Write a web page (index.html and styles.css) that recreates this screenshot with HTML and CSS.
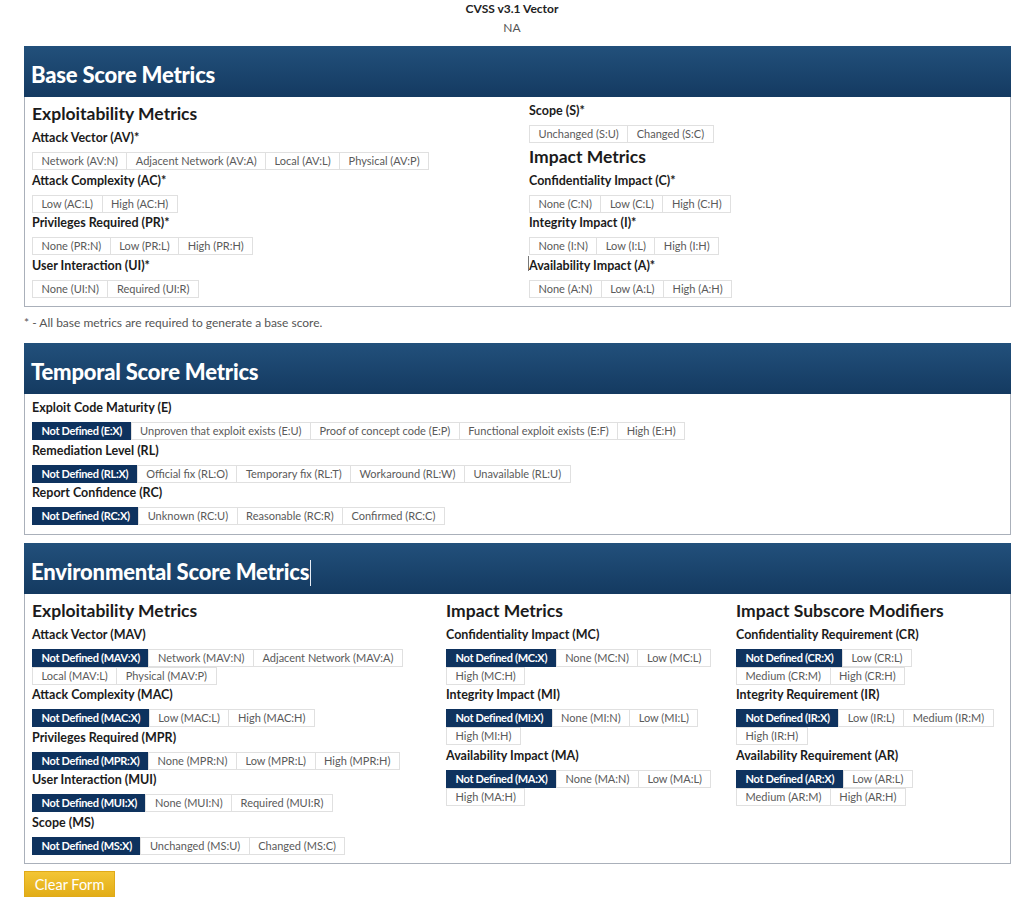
FILE: index.html
```html
<!doctype html>
<html>
<head>
<meta charset="utf-8">
<title>CVSS v3.1 Calculator</title>
<link rel="stylesheet" href="styles.css">
</head>
<body>
<div class="vector">
	<div class="vector_title">CVSS v3.1 Vector</div>
	<div class="vector_value">NA</div>
</div>

<div class="wrap">
	<!-- base -->
	<div class="panel">
		<div class="panel_head"><h2>Base Score Metrics</h2></div>
		<div class="panel_body cols2">
			<div class="col">
				<h3>Exploitability Metrics</h3>
				<div class="label">Attack Vector (AV)*</div>
				<div class="group">
					<button>Network (AV:N)</button><button>Adjacent Network (AV:A)</button><button>Local (AV:L)</button><button>Physical (AV:P)</button>
				</div>
				<div class="label">Attack Complexity (AC)*</div>
				<div class="group">
					<button>Low (AC:L)</button><button>High (AC:H)</button>
				</div>
				<div class="label">Privileges Required (PR)*</div>
				<div class="group">
					<button>None (PR:N)</button><button>Low (PR:L)</button><button>High (PR:H)</button>
				</div>
				<div class="label">User Interaction (UI)*</div>
				<div class="group">
					<button>None (UI:N)</button><button>Required (UI:R)</button>
				</div>
			</div>
			<div class="col">
				<div class="label">Scope (S)*</div>
				<div class="group">
					<button>Unchanged (S:U)</button><button>Changed (S:C)</button>
				</div>
				<h3>Impact Metrics</h3>
				<div class="label">Confidentiality Impact (C)*</div>
				<div class="group">
					<button>None (C:N)</button><button>Low (C:L)</button><button>High (C:H)</button>
				</div>
				<div class="label">Integrity Impact (I)*</div>
				<div class="group">
					<button>None (I:N)</button><button>Low (I:L)</button><button>High (I:H)</button>
				</div>
				<div class="label"><span class="caret"></span>Availability Impact (A)*</div>
				<div class="group">
					<button>None (A:N)</button><button>Low (A:L)</button><button>High (A:H)</button>
				</div>
			</div>
		</div>
	</div>
	<p class="note">* - All base metrics are required to generate a base score.</p>

	<!-- temporal -->
	<div class="panel">
		<div class="panel_head"><h2>Temporal Score Metrics</h2></div>
		<div class="panel_body">
			<div class="label">Exploit Code Maturity (E)</div>
			<div class="group">
				<button class="on">Not Defined (E:X)</button><button>Unproven that exploit exists (E:U)</button><button>Proof of concept code (E:P)</button><button>Functional exploit exists (E:F)</button><button>High (E:H)</button>
			</div>
			<div class="label">Remediation Level (RL)</div>
			<div class="group">
				<button class="on">Not Defined (RL:X)</button><button>Official fix (RL:O)</button><button>Temporary fix (RL:T)</button><button>Workaround (RL:W)</button><button>Unavailable (RL:U)</button>
			</div>
			<div class="label">Report Confidence (RC)</div>
			<div class="group">
				<button class="on">Not Defined (RC:X)</button><button>Unknown (RC:U)</button><button>Reasonable (RC:R)</button><button>Confirmed (RC:C)</button>
			</div>
		</div>
	</div>

	<!-- environmental -->
	<div class="panel env">
		<div class="panel_head"><h2>Environmental Score Metrics<span class="cursor"></span></h2></div>
		<div class="panel_body cols3">
			<div class="col">
				<h3>Exploitability Metrics</h3>
				<div class="label">Attack Vector (MAV)</div>
				<div class="group">
					<button class="on">Not Defined (MAV:X)</button><button>Network (MAV:N)</button><button>Adjacent Network (MAV:A)</button><button>Local (MAV:L)</button><button>Physical (MAV:P)</button>
				</div>
				<div class="label">Attack Complexity (MAC)</div>
				<div class="group">
					<button class="on">Not Defined (MAC:X)</button><button>Low (MAC:L)</button><button>High (MAC:H)</button>
				</div>
				<div class="label">Privileges Required (MPR)</div>
				<div class="group">
					<button class="on">Not Defined (MPR:X)</button><button>None (MPR:N)</button><button>Low (MPR:L)</button><button>High (MPR:H)</button>
				</div>
				<div class="label">User Interaction (MUI)</div>
				<div class="group">
					<button class="on">Not Defined (MUI:X)</button><button>None (MUI:N)</button><button>Required (MUI:R)</button>
				</div>
				<div class="label">Scope (MS)</div>
				<div class="group">
					<button class="on">Not Defined (MS:X)</button><button>Unchanged (MS:U)</button><button>Changed (MS:C)</button>
				</div>
			</div>
			<div class="col">
				<h3>Impact Metrics</h3>
				<div class="label">Confidentiality Impact (MC)</div>
				<div class="group">
					<button class="on">Not Defined (MC:X)</button><button>None (MC:N)</button><button>Low (MC:L)</button><button>High (MC:H)</button>
				</div>
				<div class="label">Integrity Impact (MI)</div>
				<div class="group">
					<button class="on">Not Defined (MI:X)</button><button>None (MI:N)</button><button>Low (MI:L)</button><button>High (MI:H)</button>
				</div>
				<div class="label">Availability Impact (MA)</div>
				<div class="group">
					<button class="on">Not Defined (MA:X)</button><button>None (MA:N)</button><button>Low (MA:L)</button><button>High (MA:H)</button>
				</div>
			</div>
			<div class="col">
				<h3>Impact Subscore Modifiers</h3>
				<div class="label">Confidentiality Requirement (CR)</div>
				<div class="group">
					<button class="on">Not Defined (CR:X)</button><button>Low (CR:L)</button><button>Medium (CR:M)</button><button>High (CR:H)</button>
				</div>
				<div class="label">Integrity Requirement (IR)</div>
				<div class="group">
					<button class="on">Not Defined (IR:X)</button><button>Low (IR:L)</button><button>Medium (IR:M)</button><button>High (IR:H)</button>
				</div>
				<div class="label">Availability Requirement (AR)</div>
				<div class="group">
					<button class="on">Not Defined (AR:X)</button><button>Low (AR:L)</button><button>Medium (AR:M)</button><button>High (AR:H)</button>
				</div>
			</div>
		</div>
	</div>

	<button class="clear">Clear Form</button>
</div>
</body>
</html>
```

FILE: styles.css
```css
*{margin:0; padding:0; box-sizing:border-box;}
body{background:#fff; font-family:Lato, "Liberation Sans", sans-serif; color:#222;}

.vector{text-align:center; font-size:12px; line-height:15px; padding-top:1px;}
.vector_title{font-weight:bold; color:#222;}
.vector_value{color:#555; margin-top:4px;}

.wrap{margin:11px 13px 0 24px;}

.panel{border:1px solid #aab0ba; border-top:0;}
.panel_head{height:51px; background:linear-gradient(#22507b, #143a61); padding:15px 0 0 7px; margin:0 -1px;}
.panel_head h2{color:#fff; font-size:22px; line-height:28px; font-weight:900; letter-spacing:-0.2px;}
.cursor{display:inline-block; width:1px; height:26px; background:#e8eef6; vertical-align:-6px; margin-left:1px;}

.panel_body{padding:6px 8px 6px 7px;}
.cols2{display:grid; grid-template-columns:497px 1fr;}
.cols3{display:grid; grid-template-columns:414px 290px 1fr;}

h3{font-size:17.5px; line-height:22px; font-weight:bold; color:#1b1b1b; margin-bottom:5px;}
.label{font-size:12.5px; line-height:15px; font-weight:bold; color:#1b1b1b; position:relative;}
.caret{position:absolute; left:-1px; top:-2px; width:1px; height:15px; background:#777;}

.group{display:flex; flex-wrap:wrap; margin:7px 0 2.5px;}
.group button{height:18px; line-height:16px; padding:0 8.5px; border:1px solid #e0e0e0; margin-right:-1px; background:#fff; color:#5a5a5a; font-family:Lato, "Liberation Sans", sans-serif; font-size:11px; cursor:pointer;}
.group button.on{background:#0e325e; border-color:#0e325e; color:#fff; font-weight:bold; letter-spacing:-0.3px;}

.note{font-size:12px; line-height:15px; color:#555; margin:8px 0 13px;}
.panel.env{margin-top:8px;}

.clear{display:block; margin-top:7px; width:91px; height:26px; border:1px solid #e0aa18; background:linear-gradient(#f3c535, #e2ad17); color:#fff; font-family:Lato, "Liberation Sans", sans-serif; font-size:14.5px; cursor:pointer;}
```
